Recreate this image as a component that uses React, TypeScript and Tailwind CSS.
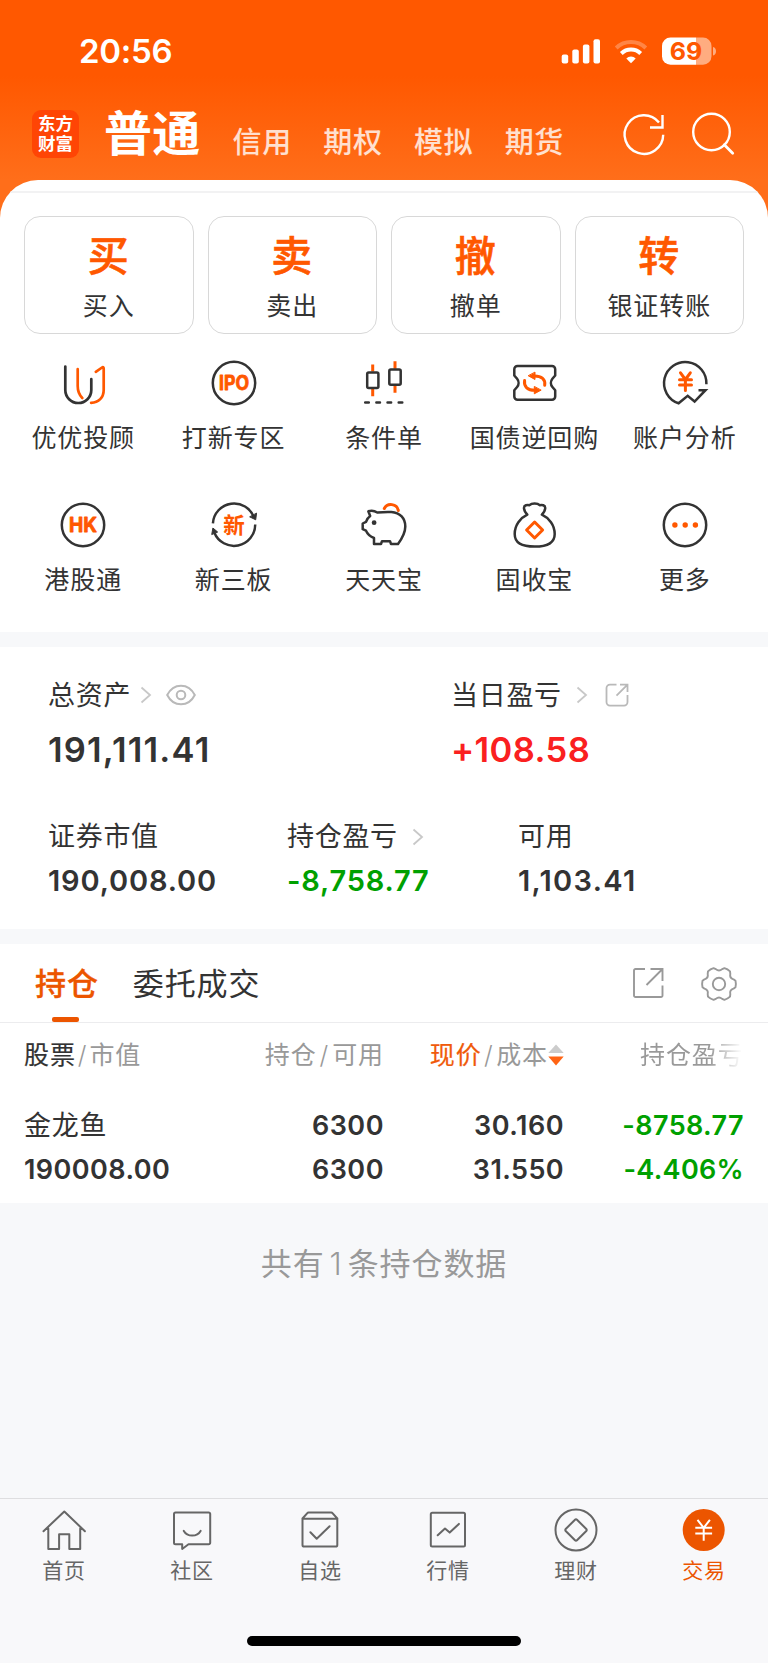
import React from 'react';

const DARK = '#333333';
const HOT = '#ff5800';

function Stroke({ children, size = 48, color = DARK, width = 2.5 }: { children: React.ReactNode; size?: number; color?: string; width?: number }) {
  return (
    <svg width={size} height={size} viewBox={`0 0 ${size} ${size}`} fill="none" stroke={color} strokeWidth={width} strokeLinecap="round" strokeLinejoin="round" className="block shrink-0">
      {children}
    </svg>
  );
}

function BadgeText({ y, size, width, outline = 0.8, children }: { y: number; size: number; width: number; outline?: number; children: string }) {
  return (
    <text x="24" y={y} textAnchor="middle" textLength={width} lengthAdjust="spacingAndGlyphs" fontSize={size} fill={HOT} stroke={HOT} strokeWidth={outline} className="font-['Inter','Noto_Sans_CJK_SC',sans-serif] font-bold">
      {children}
    </text>
  );
}

const features: { label: string; icon: React.ReactNode }[] = [
  {
    label: '优优投顾',
    icon: (
      <Stroke width={2.7}>
        <path d="M6.3 7.6V31a13 13 0 0 0 26 0V20.2" />
        <path stroke={HOT} d="M18.7 10.2V27c0 5.4 1.6 9 4.6 12M36.8 12.8l6.2-4.3c.9-.6 1.7-.2 1.7.9V31c0 7.600-5 12.600-12.600 12.800" />
      </Stroke>
    ),
  },
  {
    label: '打新专区',
    icon: (
      <Stroke>
        <circle cx="24" cy="24" r="21.200" />
        <BadgeText y={31} size={19.5} width={30}>IPO</BadgeText>
      </Stroke>
    ),
  },
  {
    label: '条件单',
    icon: (
      <Stroke>
        <path stroke={HOT} strokeLinecap="butt" strokeWidth="3" d="M12.700 5.500v7M12.700 30v7.200M35 2.200v7.500M35 26.500v7.300" />
        <rect x="7.200" y="13.500" width="11.200" height="15.600" rx="1.500" />
        <rect x="29.300" y="10.500" width="11.400" height="15.200" rx="1.500" />
        <path strokeDasharray="3.600 7.560" d="M5.200 43.500H43" />
      </Stroke>
    ),
  },
  {
    label: '国债逆回购',
    icon: (
      <Stroke>
        <path d="M7.500 7H42a3.200 3.200 0 0 1 3.200 3.200V16.500l-2.800 3.300a6.500 6.500 0 0 0 0 8.200l2.800 3.300v6.300A3.200 3.200 0 0 1 42 40.800H7.500a3.200 3.200 0 0 1-3.200-3.200v-6.300L7.100 28a6.500 6.500 0 0 0 0-8.200l-2.800-3.300V10.200A3.200 3.200 0 0 1 7.500 7Z" />
        <path stroke={HOT} strokeWidth="3" d="M24.500 17c7 0 11.200 3.500 10.200 9.300M24.800 31.300c-7 0-11.200-3.500-10.200-9.700" />
        <path fill={HOT} stroke={HOT} strokeWidth="1" d="M25 13.500v7l-6.500-3.600ZM24.300 27.800v7l6.500-3.500Z" />
      </Stroke>
    ),
  },
  {
    label: '账户分析',
    icon: (
      <Stroke>
        <path strokeLinecap="butt" strokeLinejoin="miter" d="M45.400 25.300A21.200 21.200 0 1 0 17.600 44.300L26.700 36.800l6.900 5.700L44.500 31.200h-7" />
        <path stroke={HOT} strokeWidth="3" d="m19.500 13.800 4.900 6.700 4.900-6.700M24.400 20.500V31.500M18.500 20.800h12M18.500 26h12" />
      </Stroke>
    ),
  },
  {
    label: '港股通',
    icon: (
      <Stroke>
        <circle cx="24" cy="24" r="21.200" />
        <BadgeText y={31.200} size={20} width={28}>HK</BadgeText>
      </Stroke>
    ),
  },
  {
    label: '新三板',
    icon: (
      <Stroke>
        <path strokeLinecap="butt" d="M2.900 22.300A21.200 21.200 0 0 1 44 16.500M45.200 23.500A21.200 21.200 0 0 1 4.300 31.500" />
        <path fill={DARK} strokeWidth="1" d="M46.500 12.500 45.700 18.800 40 16ZM1.800 33.200 2.900 27l4.500 3.800Z" />
        <BadgeText y={31.800} size={21.500} width={21.500} outline={0.1}>新</BadgeText>
      </Stroke>
    ),
  },
  {
    label: '天天宝',
    icon: (
      <Stroke>
        <path d="M8.300 10.300c2.800-1 6-.7 9 1.200 4-.4 9-.7 14-.5 9 .6 14 6.500 14 14.500 0 7.500-4 13-7.300 17.500h-7l-1-2.800h-8l-1 2.800h-7V37C10 35.500 7.500 33 6 29.700l-3.300-1.500V22.500l3.300-1.600c.6-2.200 2-4.300 4.200-5.900Z" />
        <circle cx="14.100" cy="21.700" r="2.400" fill={DARK} stroke="none" />
        <path stroke={HOT} strokeWidth="3" d="M24.300 7.500c3-6 12.700-5 14 2" />
      </Stroke>
    ),
  },
  {
    label: '固收宝',
    icon: (
      <Stroke>
        <path d="M17.300 13.700c-2-2.200-3.400-4.500-3.300-7 .1-2.600 3.200-3 5.500-2.500 2.200-2.300 8-2.300 10.200 0 2.300-.5 5.400-.1 5.500 2.500.1 2.500-1.300 4.800-3.300 7C39 17 44.700 24 44.700 33c0 9-6.700 12.600-20 12.600S4.700 42 4.700 33c0-9 5.600-16 12.600-19.300Z" />
        <path stroke={HOT} strokeWidth="3" d="m24.600 21 8 8-8 8-8-8Z" />
      </Stroke>
    ),
  },
  {
    label: '更多',
    icon: (
      <Stroke>
        <circle cx="24" cy="24" r="21.200" />
        <g fill={HOT} stroke="none">
          <circle cx="13.900" cy="24" r="2.700" />
          <circle cx="24.200" cy="24" r="2.700" />
          <circle cx="34.400" cy="24" r="2.700" />
        </g>
      </Stroke>
    ),
  },
];

const trades = [
  ['买', '买入'],
  ['卖', '卖出'],
  ['撤', '撤单'],
  ['转', '银证转账'],
];

const navItems: { label: string; active?: boolean; icon: React.ReactNode }[] = [
  {
    label: '首页',
    icon: <path d="M3.500 25.200 24.300 5.500l20.600 19.700M8.300 22.500v20.600h10.800V28.200h10.200v14.900h10.900V22.500" />,
  },
  {
    label: '社区',
    icon: <path d="M7.500 6.500h33.200a1.500 1.500 0 0 1 1.500 1.500v28.800a1.500 1.500 0 0 1-1.500 1.500H20.500L14.200 43v-4.700H7.500a1.500 1.500 0 0 1-1.500-1.500V8A1.500 1.500 0 0 1 7.500 6.500ZM15.800 24.900c3.500 6.200 13.300 6.200 16.800 0" />,
  },
  {
    label: '自选',
    icon: <path d="M6.500 12.800V38.900a1.700 1.700 0 0 0 1.700 1.700h31.400a1.700 1.700 0 0 0 1.700-1.700V12.800ZM6.500 12.500l4.600-5.200a2 2 0 0 1 1.500-.7h22.600a2 2 0 0 1 1.500.7l4.600 5.200M14.400 26.300l6.300 6.500L33.600 20.300" />,
  },
  {
    label: '行情',
    icon: (
      <>
        <rect x="6.800" y="6.800" width="34.200" height="33.800" rx="1.500" />
        <path d="m13.700 29.200 7.300-6.700 4.700 4.100 9.200-8.700" />
      </>
    ),
  },
  {
    label: '理财',
    icon: (
      <>
        <circle cx="24" cy="24" r="20.500" />
        <path d="m25 13.700 9.300 9.300a1.400 1.400 0 0 1 0 2L25 34.300a1.400 1.400 0 0 1-2 0L13.700 25a1.400 1.400 0 0 1 0-2L23 13.700a1.400 1.400 0 0 1 2 0Z" />
      </>
    ),
  },
  {
    label: '交易',
    active: true,
    icon: (
      <>
        <circle cx="23.700" cy="24" r="21" fill="#ec5500" stroke="none" />
        <path stroke="#fff" strokeLinecap="butt" d="m17.500 13.800 6.200 8 6.200-8M23.700 21.500V34.800M15.300 21.800h16.800M15.300 27.500h16.800" />
      </>
    ),
  },
];

function Chevron() {
  return (
    <svg width="12" height="18" viewBox="0 0 12 18" fill="none" stroke="#c8c8c8" strokeWidth="1.800" className="block shrink-0">
      <path d="m1.500 1.500 8.500 7.500-8.500 7.500" />
    </svg>
  );
}

function gearPath() {
  const at = (deg: number, r: number) => {
    const a = (deg * Math.PI) / 180;
    return `${(20 + r * Math.cos(a)).toFixed(2)} ${(20 + r * Math.sin(a)).toFixed(2)}`;
  };
  let d = `M${at(-11, 16.8)}`;
  for (let i = 0; i < 6; i++) {
    const t = i * 60;
    d += `Q${at(t, 17.300)} ${at(t + 11, 16.800)}L${at(t + 18, 15.200)}Q${at(t + 30, 12)} ${at(t + 42, 15.200)}L${at(t + 49, 16.800)}`;
  }
  return d + 'Z';
}

function StatusBar() {
  return (
    <div className="flex h-[103px] items-center justify-between pr-[52px] pl-[79px] text-white">
      <span className="text-[33px] leading-none font-semibold tracking-[-0.3px]">20:56</span>
      <svg width="156" height="36" viewBox="0 -3 156 36" className="block">
        <g fill="#fff">
          <rect x="1.700" y="17.500" width="6.500" height="9" rx="2" />
          <rect x="12.300" y="12.500" width="6.500" height="14" rx="2" />
          <rect x="22.900" y="7.500" width="6.500" height="19" rx="2" />
          <rect x="33.500" y="2.300" width="6.500" height="24.200" rx="2" />
          <path d="M71 26.200 66.300 21.500a6.800 6.800 0 0 1 9.400 0Z" />
        </g>
        <g fill="none" stroke="#fff" strokeWidth="4">
          <path opacity=".27" d="M56.200 11a21.500 21.500 0 0 1 29.600 0" />
          <path d="M61.300 16.500a14 14 0 0 1 19.400 0" />
        </g>
        <path fill="#fff" d="M110.500.500H136v27.200h-25.500a8.500 8.500 0 0 1-8.500-8.500V9a8.500 8.500 0 0 1 8.500-8.500Z" />
        <path fill="#fff" fillOpacity=".5" d="M136 .500h7a8.500 8.500 0 0 1 8.500 8.500v10.200a8.500 8.500 0 0 1-8.500 8.500h-7ZM153 10c4 1 4 7.500 0 8.500Z" />
        <text x="126" y="23" textAnchor="middle" fontSize="24.500" textLength="32.500" lengthAdjust="spacingAndGlyphs" fill={HOT} className="font-['Inter',sans-serif] font-bold">69</text>
      </svg>
    </div>
  );
}

function Header() {
  return (
    <div className="flex h-[77px] items-start pr-8 pl-8 text-white">
      <div className="mt-[7px] flex h-[48px] w-[47px] flex-col items-center justify-center rounded-[9px] bg-[#ff4505] text-[17.5px] leading-[20px] font-bold">
        <span>东方</span>
        <span>财富</span>
      </div>
      <div className="mt-px ml-[25px] text-[48px] leading-[60px] font-bold tracking-[0.3px]">普通</div>
      <div className="ml-[32px] flex gap-[31.5px] pt-[24px] text-[29px] leading-[32px] font-medium tracking-[0.6px] text-white/80">
        {['信用', '期权', '模拟', '期货'].map((t) => (
          <span key={t}>{t}</span>
        ))}
      </div>
      <div className="mt-[7px] ml-auto flex gap-[20px]">
        <Stroke color="#fff" width={2.400}>
          <path strokeLinecap="butt" strokeLinejoin="miter" d="M43.200 24.800A19.300 19.300 0 1 1 39 12.500M42.500 5v12.500H30" />
        </Stroke>
        <Stroke color="#fff" width={2.400}>
          <circle cx="23.500" cy="22" r="18.300" />
          <path strokeWidth="2.800" d="m36.300 34.800 8.400 8.400" />
        </Stroke>
      </div>
    </div>
  );
}

function Assets() {
  return (
    <section className="h-[282px] bg-white pt-[30px] text-[#333]">
      <div className="flex pl-[48px]">
        <div className="w-[403px]">
          <div className="flex h-[35px] items-center">
            <span className="pt-[2px] text-[27px] leading-[35px] tracking-[0.7px]">总资产</span>
            <span className="ml-[9px]"><Chevron /></span>
            <svg width="32" height="24" viewBox="0 0 32 24" fill="none" stroke="#b9b9b9" strokeWidth="2" className="ml-[13px] block">
              <path d="M2.200 12C8.500-.4 23.500-.4 29.800 12 23.500 24.400 8.500 24.400 2.200 12Z" />
              <circle cx="16" cy="12" r="4.300" />
            </svg>
          </div>
          <div className="mt-[17px] text-[34.5px] leading-[42px] font-semibold tracking-[1.2px]">191,111.41</div>
        </div>
        <div>
          <div className="flex h-[35px] items-center">
            <span className="pt-[2px] text-[27px] leading-[35px] tracking-[0.7px]">当日盈亏</span>
            <span className="ml-[14px]"><Chevron /></span>
            <svg width="26" height="26" viewBox="0 0 26 26" fill="none" stroke="#b9b9b9" strokeWidth="1.800" className="ml-[16px] block">
              <path d="M12.500 2.600H6A3.500 3.500 0 0 0 2.500 6.100v14A3.500 3.500 0 0 0 6 23.600h14a3.500 3.500 0 0 0 3.500-3.500V13M16 2.600h7.500v7.500M23.500 2.600 12.500 13.600" />
            </svg>
          </div>
          <div className="mt-[17px] text-[34.5px] leading-[42px] font-semibold tracking-[0.4px] text-[#fa2020]">+108.58</div>
        </div>
      </div>
      <div className="mt-[48px] flex pl-[48px]">
        <div className="w-[239px]">
          <div className="text-[27px] leading-[36px] tracking-[0.7px]">证券市值</div>
          <div className="mt-[9px] text-[29px] leading-[34px] font-semibold tracking-[0.85px]">190,008.00</div>
        </div>
        <div className="w-[231px]">
          <div className="flex items-center text-[27px] leading-[36px] tracking-[0.7px]">
            持仓盈亏
            <span className="ml-[14px]"><Chevron /></span>
          </div>
          <div className="mt-[9px] text-[29px] leading-[34px] font-semibold tracking-[0.8px] text-[#00a000]">-8,758.77</div>
        </div>
        <div>
          <div className="text-[27px] leading-[36px] tracking-[0.7px]">可用</div>
          <div className="mt-[9px] text-[29px] leading-[34px] font-semibold tracking-[1.3px]">1,103.41</div>
        </div>
      </div>
    </section>
  );
}

function Holdings() {
  return (
    <section className="h-[259px] bg-white text-[#333]">
      <div className="flex h-[79px] items-start border-b border-[#ececee] pl-[35px]">
        <div className="flex h-[78px] flex-col items-center">
          <span className="mt-[20px] text-[31px] leading-[40px] font-medium tracking-[0.9px] text-[#ec5500] [-webkit-text-stroke:0.3px_#ec5500]">持仓</span>
          <span className="mt-auto mr-[2px] h-[5.500px] w-[27px] rounded-[2px] bg-[#ec5500]" />
        </div>
        <span className="mt-[20px] ml-[34px] text-[31px] leading-[40px] tracking-[0.9px]">委托成交</span>
        <svg width="34" height="34" viewBox="0 0 34 34" fill="none" stroke="#999" strokeWidth="1.900" className="mt-[22px] ml-auto block">
          <path d="M14 3H4.500A1.500 1.500 0 0 0 3 4.500v25A1.500 1.500 0 0 0 4.500 31H30a1.500 1.500 0 0 0 1.500-1.500V19.500M19.500 3h12v12M31 3.500 15.500 19" />
        </svg>
        <svg width="40" height="40" viewBox="0 0 40 40" fill="none" stroke="#999" strokeWidth="1.900" strokeLinejoin="round" className="mt-[20px] mr-[29.5px] ml-[33.5px] block">
          <path d={gearPath()} />
          <circle cx="20" cy="20" r="6.200" />
        </svg>
      </div>
      <div className="grid h-[64px] grid-cols-[200px_160px_180px_180px] items-center px-6 text-[25px] leading-[36px] tracking-[0.9px] text-[#999]">
        <div className="flex gap-[2px]">
          <span className="text-[#333] [-webkit-text-stroke:0.2px_#333]">股票</span>
          <span className="font-light">/</span>
          <span>市值</span>
        </div>
        <div className="flex justify-end gap-[3px]">
          <span>持仓</span>
          <span className="font-light">/</span>
          <span>可用</span>
        </div>
        <div className="flex items-center justify-end">
          <span className="text-[#f05a0a] [-webkit-text-stroke:0.2px_#f05a0a]">现价</span>
          <span className="mx-[2.500px] font-light">/</span>
          <span>成本</span>
          <svg width="16" height="22" viewBox="0 0 16 22" className="block">
            <path fill="#ccc" d="M8 .500 15.700 9H.300Z" />
            <path fill="#ff6414" d="M8 21.500 .300 12.500h15.400Z" />
          </svg>
        </div>
        <div className="bg-[linear-gradient(to_right,#999_0,#999_145px,#fff_178px)] bg-clip-text pl-[76px] whitespace-nowrap text-transparent">
          持仓盈亏
        </div>
      </div>
      <div className="grid grid-cols-[200px_160px_180px_180px] px-6 pt-[17px] text-right text-[27px] leading-[44px] font-semibold tracking-[0.5px]">
        <div className="text-left font-normal tracking-[0.7px]">金龙鱼</div>
        <div>6300</div>
        <div>30.160</div>
        <div className="tracking-[0.4px] text-[#00a000]">-8758.77</div>
        <div className="text-left tracking-[0.45px]">190008.00</div>
        <div>6300</div>
        <div className="tracking-[0.4px]">31.550</div>
        <div className="tracking-[0.3px] text-[#00a000]">-4.406%</div>
      </div>
    </section>
  );
}

function BottomNav() {
  return (
    <nav className="mt-auto flex h-[165px] flex-col border-t border-[#dedee0] bg-[#f8f8fa]">
      <div className="grid grid-cols-6 pt-[7px]">
        {navItems.map((n) => (
          <div key={n.label} className="flex flex-col items-center">
            <Stroke color="#666" width={2}>{n.icon}</Stroke>
            <span className={`mt-[3px] text-[21px] leading-[28px] tracking-[0.8px] ${n.active ? 'text-[#ec5500]' : 'text-[#666]'}`}>{n.label}</span>
          </div>
        ))}
      </div>
      <div className="mx-auto mt-auto mb-[17px] h-[10px] w-[274px] rounded-full bg-black" />
    </nav>
  );
}

export default function App() {
  return (
    <div className="flex h-[1663px] w-[768px] flex-col overflow-hidden bg-[#f7f8fa] font-['Inter','Noto_Sans_CJK_SC',sans-serif]">
      <div className="h-[632px] bg-[linear-gradient(to_bottom,#ff5800_0,#ff5800_76px,#ff6e1a_180px,#ff6e1a_230px)]">
        <StatusBar />
        <Header />
        <div className="h-[452px] overflow-hidden rounded-t-[38px] bg-white pt-[11px]">
          <div className="h-[2px] bg-[#f2f2f3]" />
          <div className="grid grid-cols-4 gap-[14px] px-6 pt-[23px]">
            {trades.map(([big, small]) => (
              <button key={big} className="flex h-[118px] flex-col items-center rounded-[16px] border border-[#d8d8d8] pt-[19px]">
                <span className="mr-px text-[41px] leading-[40px] font-medium text-[#ff5800] [-webkit-text-stroke:0.6px_#ff5800]">{big}</span>
                <span className="mt-[15px] text-[25px] leading-[30px] tracking-[0.9px] text-[#333]">{small}</span>
              </button>
            ))}
          </div>
          <div className="grid grid-cols-5 px-2 pt-[25px]">
            {features.map((f) => (
              <div key={f.label} className="flex h-[142px] flex-col items-center">
                {f.icon}
                <span className="mt-[15px] text-[25px] leading-[32px] tracking-[0.9px] whitespace-nowrap text-[#333]">{f.label}</span>
              </div>
            ))}
          </div>
        </div>
      </div>
      <div className="h-[15px] shrink-0" />
      <Assets />
      <div className="h-[15px] shrink-0" />
      <Holdings />
      <p className="pt-[41px] text-center text-[31px] leading-[40px] tracking-[0.9px] text-[#999]">
        共有<span className="mx-[5px] font-light">1</span>条持仓数据
      </p>
      <BottomNav />
    </div>
  );
}
